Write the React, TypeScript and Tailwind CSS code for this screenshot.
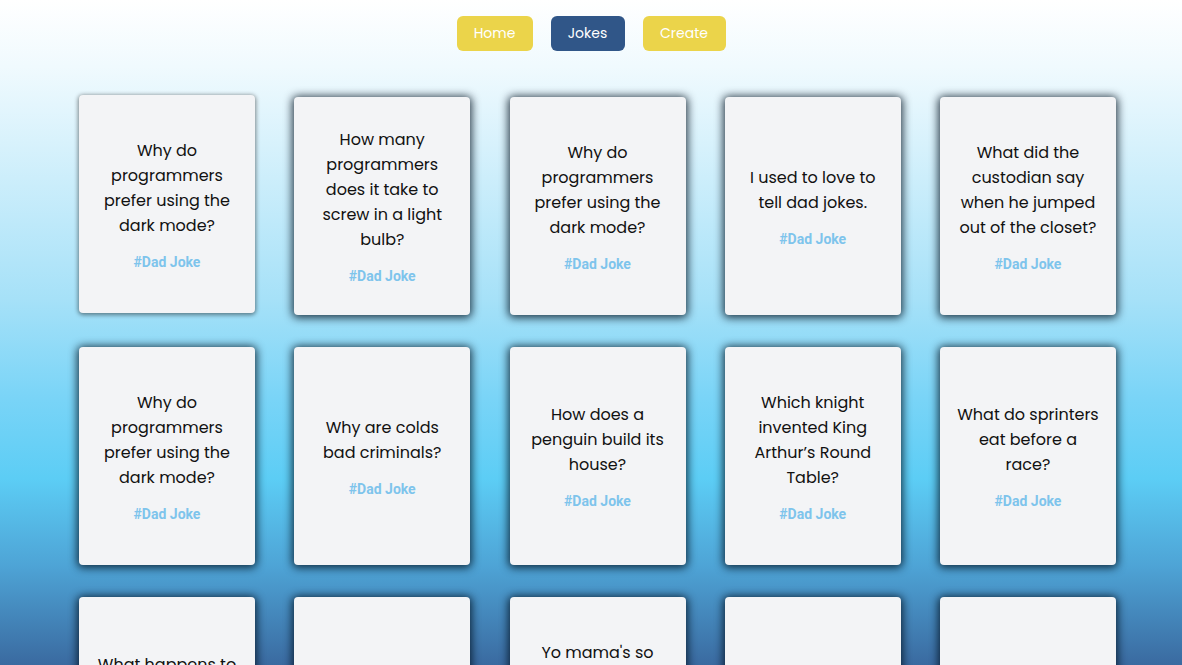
import React from "react";

const jokes: string[][] = [
  ["Why do", "programmers", "prefer using the", "dark mode?"],
  ["How many", "programmers", "does it take to", "screw in a light", "bulb?"],
  ["Why do", "programmers", "prefer using the", "dark mode?"],
  ["I used to love to", "tell dad jokes."],
  ["What did the", "custodian say", "when he jumped", "out of the closet?"],
  ["Why do", "programmers", "prefer using the", "dark mode?"],
  ["Why are colds", "bad criminals?"],
  ["How does a", "penguin build its", "house?"],
  ["Which knight", "invented King", "Arthur’s Round", "Table?"],
  ["What do sprinters", "eat before a", "race?"],
  ["What happens to", "a frog’s car when", "it breaks down?"],
  ["Why did the cow", "cross the road?"],
  ["Yo mama's so", "old, her birth", "certificate says", "expired."],
  ["What do you call", "a fake noodle?"],
  ["Why can’t a bike", "stand on its own?"],
];

function Card({ lines, first }: { lines: string[]; first?: boolean }) {
  return (
    <div
      className={
        "h-[218px] w-[176px] rounded-[4px] bg-gray-100 px-[12px] flex flex-col items-center justify-center text-center " +
        (first
          ? "-translate-y-[2px] shadow-[0_1px_4px_1px_rgba(0,0,0,0.45)]"
          : "shadow-[0_1px_8px_2px_rgba(0,15,30,0.78)]")
      }
    >
      <div className="text-[16px] leading-[25px] text-[#111111]">
        {lines.map((l, i) => (
          <div key={i} className="whitespace-nowrap">
            {l}
          </div>
        ))}
      </div>
      <div className="mt-[16px] font-['Roboto',sans-serif] text-[14px] font-bold leading-[17px] text-[#7ec4ec]">
        #Dad Joke
      </div>
    </div>
  );
}

export default function App() {
  return (
    <div className="h-[665px] w-full overflow-hidden bg-[linear-gradient(180deg,#ffffff_0%,#f0fafe_10%,#a6e1f8_45%,#79d4f7_60%,#5ccdf5_72%,#4ea4d6_85%,#3a6aa0_100%)] font-['Poppins','Inter',sans-serif]">
      <nav className="flex justify-center gap-[18px] pt-[16px]">
        <button className="h-[35px] w-[76px] rounded-[6px] bg-[#ebd44a] text-[14px] text-white">Home</button>
        <button className="h-[35px] w-[74px] rounded-[6px] bg-[#305688] text-[14px] text-white">Jokes</button>
        <button className="h-[35px] w-[83px] rounded-[6px] bg-[#ebd44a] text-[14px] text-white">Create</button>
      </nav>
      <div className="ml-[79px] mt-[46px] grid grid-cols-[repeat(5,176px)] gap-x-[39.25px] gap-y-[32px]">
        {jokes.map((j, i) => (
          <Card key={i} lines={j} first={i === 0} />
        ))}
      </div>
    </div>
  );
}
